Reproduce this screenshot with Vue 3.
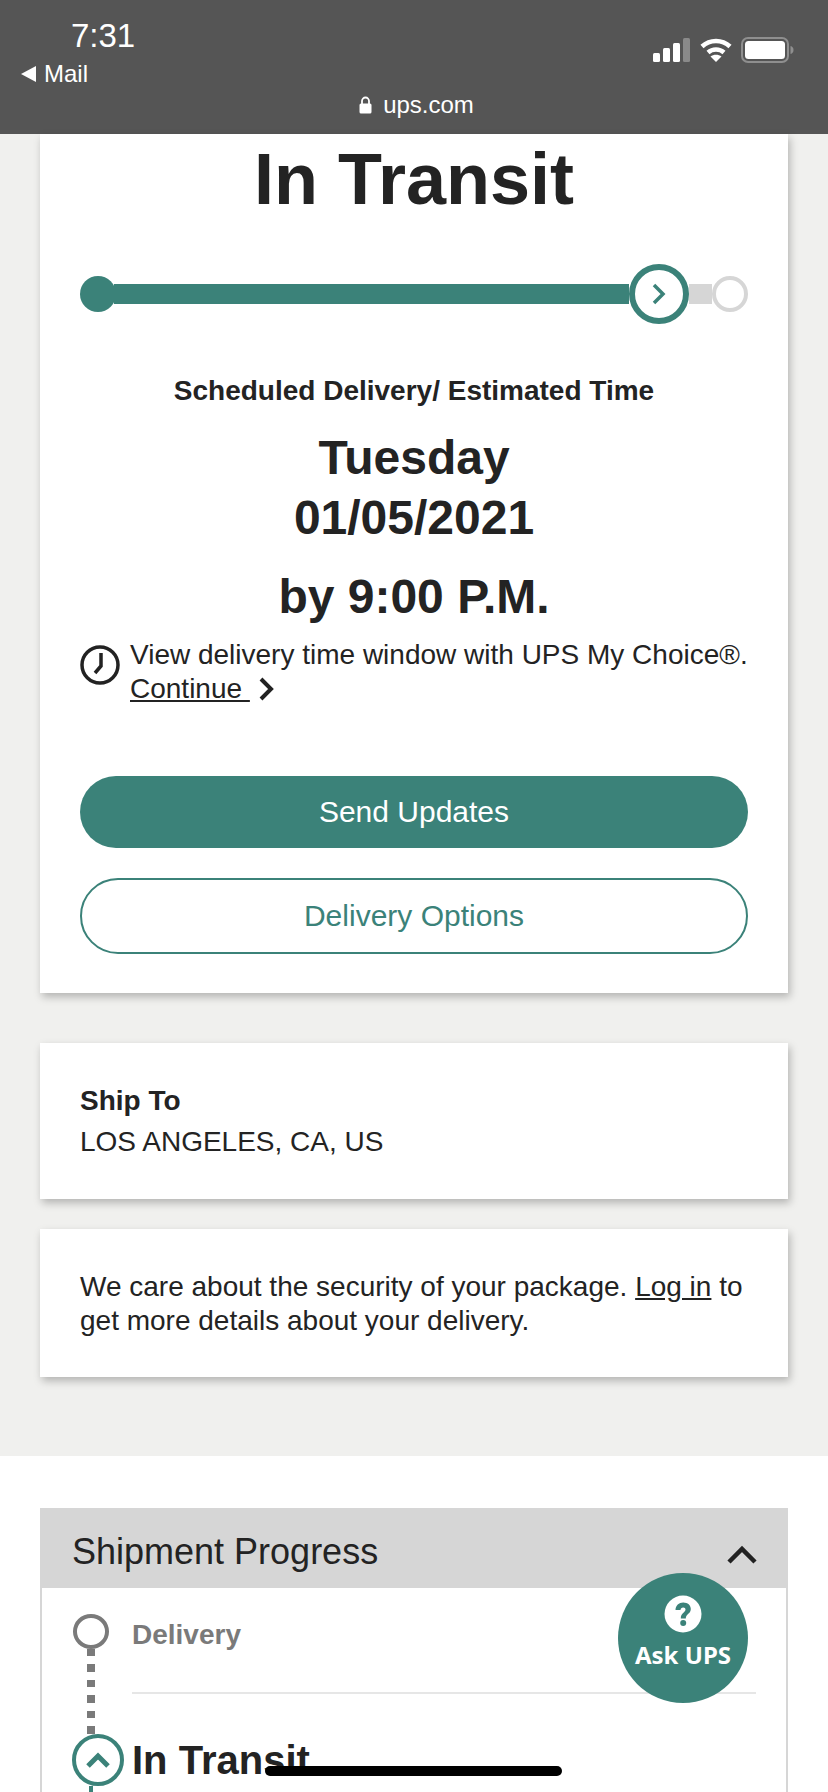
<script setup>
const dots = [1, 2, 3, 4, 5, 6];
</script>

<template>
  <div class="screen">
    <header class="topbar">
      <div class="status">
        <div class="status-left">
          <div class="time">7:31</div>
          <div class="back">
            <svg width="15" height="16" viewBox="0 0 15 16"><path d="M15 0V16L0 8Z" fill="#fff" /></svg>
            <span>Mail</span>
          </div>
        </div>
        <div class="status-right">
          <svg width="38" height="24" viewBox="0 0 38 24">
            <rect x="0" y="15" width="7" height="9" rx="1.5" fill="#fff" />
            <rect x="10" y="10" width="7" height="14" rx="1.5" fill="#fff" />
            <rect x="20" y="5" width="7" height="19" rx="1.5" fill="#fff" />
            <rect x="30" y="0" width="7" height="24" rx="1.5" fill="#8a8a8a" />
          </svg>
          <svg width="32" height="24" viewBox="0 0 32 24">
            <path d="M2 8.5C10 1 22 1 30 8.5" fill="none" stroke="#fff" stroke-width="4.500" />
            <path d="M8 14.5C12.5 10.5 19.500 10.500 24 14.500" fill="none" stroke="#fff" stroke-width="4.500" />
            <path d="M16 24L10.500 18.500C13.500 16 18.500 16 21.500 18.500Z" fill="#fff" />
          </svg>
          <svg width="53" height="26" viewBox="0 0 53 26">
            <rect x="1" y="1" width="46" height="24" rx="6" fill="none" stroke="#8f8f8f" stroke-width="2" />
            <rect x="4" y="4" width="40" height="18" rx="3.500" fill="#fff" />
            <path d="M49.500 9C51.500 9.500 52.500 11 52.500 13C52.500 15 51.500 16.500 49.500 17Z" fill="#8f8f8f" />
          </svg>
        </div>
      </div>
      <div class="address">
        <svg width="13" height="18" viewBox="0 0 13 18">
          <path d="M3 8V5a3.500 3.500 0 0 1 7 0v3" fill="none" stroke="#fff" stroke-width="1.800" />
          <rect x="0.500" y="7.500" width="12" height="10" rx="1.500" fill="#fff" />
        </svg>
        <span>ups.com</span>
      </div>
    </header>

    <main class="summary">
      <section class="card status-card">
        <h1 class="title">In Transit</h1>
        <div class="tracker">
          <span class="tracker-start"></span>
          <span class="tracker-fill"></span>
          <span class="tracker-now">
            <svg width="14" height="22" viewBox="0 0 14 22">
              <path d="M2 2L11 11L2 20" fill="none" stroke="#3b8279" stroke-width="3.500" />
            </svg>
          </span>
          <span class="tracker-rest"></span>
          <span class="tracker-end"></span>
        </div>
        <div class="eta-label">Scheduled Delivery/ Estimated Time</div>
        <div class="eta-date">Tuesday<br />01/05/2021</div>
        <div class="eta-time">by 9:00 P.M.</div>
        <div class="window">
          <svg class="clock" width="40" height="40" viewBox="0 0 40 40">
            <circle cx="20" cy="20" r="18" fill="none" stroke="#222" stroke-width="3.500" />
            <path d="M21 8V21L15 28" fill="none" stroke="#222" stroke-width="3.500" />
          </svg>
          <p class="window-text">
            View delivery time window with UPS My Choice®.
            <span class="continue">
              <a href="javascript:void(0)">Continue&nbsp;</a>
              <svg width="16" height="24" viewBox="0 0 16 24">
                <path d="M3 2L13 12L3 22" fill="none" stroke="#222" stroke-width="4" />
              </svg>
            </span>
          </p>
        </div>
        <button class="btn btn-solid">Send Updates</button>
        <button class="btn btn-outline">Delivery Options</button>
      </section>

      <section class="card ship-card">
        <div class="ship-label">Ship To</div>
        <div>LOS ANGELES, CA, US</div>
      </section>

      <section class="card login-card">
        We care about the security of your package. <a href="javascript:void(0)">Log in</a> to
        get more details about your delivery.
      </section>
    </main>

    <section class="progress">
      <div class="progress-box">
        <div class="progress-head">
          <span>Shipment Progress</span>
          <svg class="head-chevron" width="30" height="20" viewBox="0 0 30 20">
            <path d="M2 17L15 4L28 17" fill="none" stroke="#222" stroke-width="4.500" />
          </svg>
        </div>
        <div class="step step-next">
          <div class="step-rail">
            <span class="ring"></span>
            <span v-for="d in dots" :key="d" class="dot"></span>
          </div>
          <div class="step-name">Delivery</div>
        </div>
        <div class="step step-current">
          <div class="step-rail">
            <span class="ring-now">
              <svg width="26" height="18" viewBox="0 0 26 18">
                <path d="M3 15L13 5L23 15" fill="none" stroke="#3b8279" stroke-width="5" />
              </svg>
            </span>
            <span class="rail-line"></span>
          </div>
          <div class="step-title">In Transit</div>
        </div>
      </div>
    </section>

    <button class="ask">
      <svg width="38" height="38" viewBox="0 0 38 38">
        <circle cx="19" cy="19" r="18.500" fill="#fff" />
        <path d="M11.500 15C11.500 10.500 15 7.500 19.200 7.500C23.800 7.500 26.800 10.300 26.800 14C26.800 18.800 21.800 19 21.800 23.500H16.800C16.800 17.800 21.500 17.500 21.500 14.500C21.500 13.300 20.600 12.500 19.200 12.500C17.500 12.500 16.600 13.600 16.500 15Z" fill="#3b8279" />
        <circle cx="19.200" cy="28" r="3" fill="#3b8279" />
      </svg>
      <span>Ask UPS</span>
    </button>
    <div class="home-bar"></div>
  </div>
</template>

<style scoped>
.screen {
  position: relative;
  width: 828px;
  height: 1792px;
  overflow: hidden;
  background: #fff;
  color: #232323;
  font-family: "Liberation Sans", Arial, sans-serif;
}

.topbar {
  height: 134px;
  box-sizing: border-box;
  background: #555;
  color: #fff;
  padding: 19px 34px 0 21px;
}

.status {
  display: flex;
  justify-content: space-between;
  align-items: flex-start;
}

.time {
  font-size: 33px;
  line-height: 34px;
  padding-left: 50px;
}

.back {
  display: flex;
  align-items: center;
  gap: 8px;
  font-size: 24px;
  line-height: 26px;
  margin-top: 8px;
}

.status-right {
  display: flex;
  align-items: center;
  gap: 9px;
  margin-top: 18px;
}

.address {
  display: flex;
  justify-content: center;
  align-items: center;
  gap: 11px;
  font-size: 24px;
  line-height: 28px;
  margin-top: 4px;
  padding-left: 18px;
}

.summary {
  background: #f0f0ee;
  height: 1322px;
  box-sizing: border-box;
  padding: 0 40px;
}

.card {
  background: #fff;
  box-shadow: 2px 4px 8px rgba(0, 0, 0, 0.25);
  font-size: 28px;
  line-height: 34px;
}

.status-card {
  height: 859px;
  box-sizing: border-box;
  padding: 0 40px;
  margin-bottom: 50px;
}

.title {
  margin: 0;
  padding-top: 5px;
  font-size: 72px;
  line-height: 80px;
  font-weight: 700;
  text-align: center;
}

.tracker {
  display: flex;
  align-items: center;
  height: 60px;
  margin-top: 45px;
}

.tracker-start {
  width: 36px;
  height: 36px;
  border-radius: 50%;
  background: #3b8279;
  flex: none;
}

.tracker-fill {
  height: 20px;
  flex: 1;
  margin-left: -2px;
  background: #3b8279;
}

.tracker-now {
  display: flex;
  align-items: center;
  justify-content: center;
  width: 60px;
  height: 60px;
  box-sizing: border-box;
  border: 6px solid #3b8279;
  border-radius: 50%;
  background: #fff;
  flex: none;
}

.tracker-rest {
  width: 23px;
  height: 20px;
  background: #d6d6d6;
  flex: none;
}

.tracker-end {
  width: 36px;
  height: 36px;
  box-sizing: border-box;
  border: 4px solid #d6d6d6;
  border-radius: 50%;
  background: #fff;
  flex: none;
}

.eta-label {
  margin-top: 50px;
  font-size: 28px;
  line-height: 34px;
  font-weight: 700;
  text-align: center;
}

.eta-date {
  margin-top: 20px;
  font-size: 48px;
  line-height: 60px;
  font-weight: 700;
  text-align: center;
}

.eta-time {
  margin-top: 19px;
  font-size: 48px;
  line-height: 60px;
  font-weight: 700;
  text-align: center;
}

.window {
  display: flex;
  gap: 10px;
  margin-top: 11px;
}

.clock {
  flex: none;
  margin-top: 7px;
}

.window-text {
  margin: 0;
}

.continue {
  display: flex;
  align-items: center;
  gap: 8px;
}

a {
  color: inherit;
  text-decoration: underline;
}

.btn {
  display: block;
  width: 100%;
  box-sizing: border-box;
  border-radius: 38px;
  font-family: inherit;
  font-size: 30px;
}

.btn-solid {
  height: 72px;
  margin-top: 70px;
  border: 0;
  background: #3b8279;
  color: #fff;
}

.btn-outline {
  height: 76px;
  margin-top: 30px;
  border: 2px solid #3b8279;
  background: #fff;
  color: #3b8279;
}

.ship-card {
  height: 156px;
  box-sizing: border-box;
  padding: 41px 40px 0;
  margin-bottom: 30px;
}

.ship-label {
  font-weight: 700;
  margin-bottom: 7px;
}

.login-card {
  height: 148px;
  box-sizing: border-box;
  padding: 41px 40px 0;
}

.progress {
  padding: 52px 40px 0;
}

.progress-box {
  height: 400px;
  box-sizing: border-box;
  border: solid #d6d6d6;
  border-width: 0 2px;
}

.progress-head {
  display: flex;
  justify-content: space-between;
  align-items: center;
  height: 80px;
  box-sizing: border-box;
  margin: 0 -2px;
  padding: 8px 31px 0 32px;
  background: #d6d6d6;
  font-size: 36px;
}

.head-chevron {
  margin-top: 6px;
}

.step {
  display: flex;
}

.step-next {
  height: 146px;
  margin: 0 30px 0 0;
}

.step-rail {
  display: flex;
  flex-direction: column;
  align-items: center;
  width: 90px;
  box-sizing: border-box;
  padding-left: 8px;
  flex: none;
}

.step-next .step-rail {
  padding-top: 26px;
  gap: 8px;
}

.ring {
  width: 36px;
  height: 36px;
  box-sizing: border-box;
  margin-bottom: -8px;
  border: 4px solid #7a7a7a;
  border-radius: 50%;
}

.dot {
  width: 8px;
  height: 8px;
  background: #7a7a7a;
}

.step-name {
  flex: 1;
  padding-top: 30px;
  border-bottom: 2px solid #e6e6e6;
  height: 74px;
  font-size: 28px;
  line-height: 34px;
  font-weight: 700;
  color: #7a7a7a;
}

.ring-now {
  display: flex;
  align-items: center;
  justify-content: center;
  width: 52px;
  height: 52px;
  box-sizing: border-box;
  margin-left: 14px;
  border: 4px solid #3b8279;
  border-radius: 50%;
}

.rail-line {
  width: 4px;
  height: 30px;
  background: #3b8279;
}

.step-title {
  font-size: 40px;
  line-height: 52px;
  font-weight: 700;
}

.ask {
  position: absolute;
  left: 618px;
  top: 1573px;
  display: flex;
  flex-direction: column;
  align-items: center;
  width: 130px;
  height: 130px;
  padding: 22px 0 0;
  border: 0;
  border-radius: 50%;
  background: #3b8279;
  color: #fff;
  font-family: "Noto Sans", sans-serif;
  font-size: 24px;
  font-weight: 700;
  line-height: 30px;
}

.ask span {
  margin-top: 7px;
}

.home-bar {
  position: absolute;
  left: 265px;
  top: 1766px;
  width: 297px;
  height: 10px;
  border-radius: 5px;
  background: #000;
}
</style>
